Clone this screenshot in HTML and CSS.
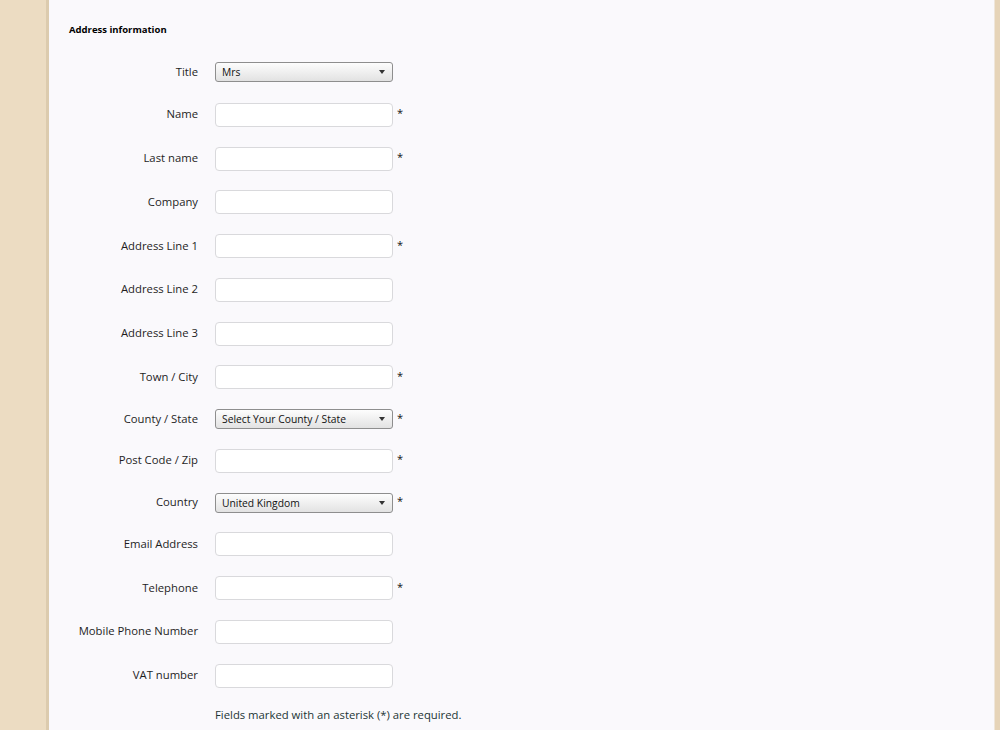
FILE: index.html
```html
<!DOCTYPE html>
<html lang="en">
<head>
<meta charset="utf-8">
<title>Address information</title>
<link rel="stylesheet" href="styles.css">
</head>
<body>
<div class="page">
  <div class="side side-left"></div>
  <main class="panel">
    <h2 class="section-title">Address information</h2>
    <form class="address-form">
      <div class="row row-first">
        <label class="label">Title</label>
        <div class="select"><span>Mrs</span><i class="caret"></i></div>
      </div>
      <div class="row">
        <label class="label">Name</label>
        <input class="field" type="text"><span class="req">*</span>
      </div>
      <div class="row">
        <label class="label">Last name</label>
        <input class="field" type="text"><span class="req">*</span>
      </div>
      <div class="row">
        <label class="label">Company</label>
        <input class="field" type="text">
      </div>
      <div class="row">
        <label class="label">Address Line 1</label>
        <input class="field" type="text"><span class="req">*</span>
      </div>
      <div class="row">
        <label class="label">Address Line 2</label>
        <input class="field" type="text">
      </div>
      <div class="row">
        <label class="label">Address Line 3</label>
        <input class="field" type="text">
      </div>
      <div class="row">
        <label class="label">Town / City</label>
        <input class="field" type="text"><span class="req">*</span>
      </div>
      <div class="row">
        <label class="label">County / State</label>
        <div class="select"><span>Select Your County / State</span><i class="caret"></i></div><span class="req">*</span>
      </div>
      <div class="row">
        <label class="label">Post Code / Zip</label>
        <input class="field" type="text"><span class="req">*</span>
      </div>
      <div class="row">
        <label class="label">Country</label>
        <div class="select"><span>United Kingdom</span><i class="caret"></i></div><span class="req">*</span>
      </div>
      <div class="row">
        <label class="label">Email Address</label>
        <input class="field" type="text">
      </div>
      <div class="row">
        <label class="label">Telephone</label>
        <input class="field" type="text"><span class="req">*</span>
      </div>
      <div class="row">
        <label class="label">Mobile Phone Number</label>
        <input class="field" type="text">
      </div>
      <div class="row">
        <label class="label">VAT number</label>
        <input class="field" type="text">
      </div>
      <p class="note">Fields marked with an asterisk (*) are required.</p>
    </form>
  </main>
  <div class="side side-right"></div>
</div>
</body>
</html>
```

FILE: styles.css
```css
html, body {
  margin: 0;
  padding: 0;
  height: 100%;
}

body {
  font-family: "Open Sans", "Noto Sans", sans-serif;
  color: #222;
  background: #ecdcc2;
  overflow: hidden;
}

.page {
  display: flex;
  height: 730px;
}

.side-left {
  width: 46px;
  background: #ecdcc2;
  border-right: 3px solid #dccbae;
}

.side-right {
  width: 5px;
  background: #e6d4b8;
  border-left: 1px solid #efe6da;
}

.panel {
  flex: 1;
  background: #faf9fc;
  padding: 23px 20px 0 20px;
}

.section-title {
  margin: 0 0 25px 0;
  font-size: 9.5px;
  font-weight: 700;
  color: #000;
  line-height: 14px;
}

.address-form {
  display: flex;
  flex-direction: column;
  gap: 19.75px;
}

.row {
  display: flex;
  align-items: center;
}

.row-first {
  margin-bottom: 1px;
}

.label {
  width: 129px;
  margin-right: 17px;
  padding-bottom: 2px;
  text-align: right;
  font-size: 11.3px;
  color: #1e1e1e;
}

.field {
  box-sizing: border-box;
  width: 178px;
  height: 24px;
  margin: 0;
  background: #fff;
  border: 1px solid #d9d9dc;
  border-radius: 4px;
  outline: none;
}

.select {
  box-sizing: border-box;
  position: relative;
  width: 178px;
  height: 20px;
  padding: 0 0 0 6px;
  display: flex;
  align-items: center;
  border: 1px solid #8e8e8e;
  border-radius: 3px;
  background: linear-gradient(#fdfdfd 0%, #f1f1f1 45%, #e2e2e2 100%);
  font-size: 10.3px;
  color: #111;
}

.caret {
  position: absolute;
  right: 7px;
  top: 7px;
  width: 0;
  height: 0;
  border-left: 3px solid transparent;
  border-right: 3px solid transparent;
  border-top: 4px solid #333;
}

.req {
  margin-left: 4px;
  padding-bottom: 3px;
  font-size: 11px;
  color: #111;
  line-height: 14px;
}

.note {
  margin: 0 0 0 146px;
  font-size: 11.3px;
  color: #1c3535;
  line-height: 16px;
}
```
